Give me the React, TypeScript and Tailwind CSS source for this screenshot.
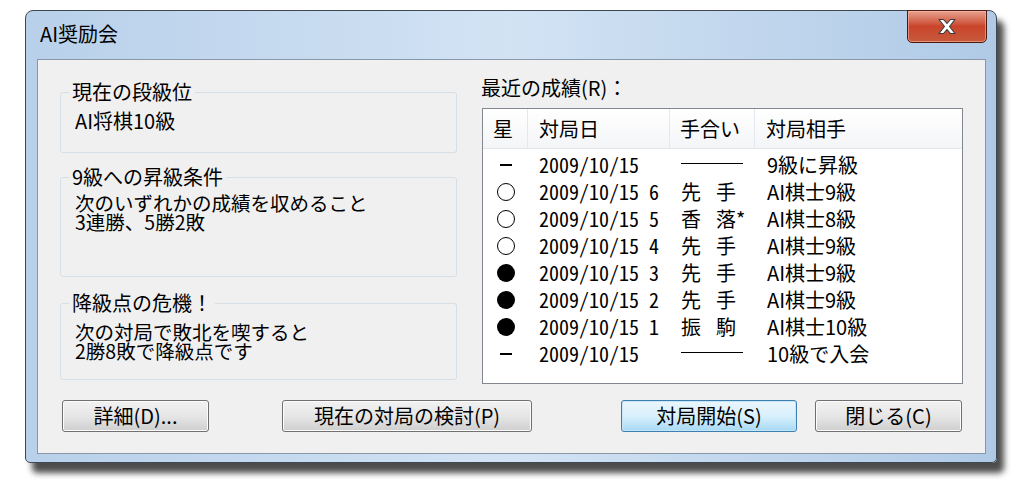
import React from 'react';

type Mark = 'dash' | 'win' | 'loss';

interface Row {
  mark: Mark;
  date: string;
  handicap: [string, string] | null;
  opponent: string;
}

const rows: Row[] = [
  { mark: 'dash', date: '2009/10/15', handicap: null, opponent: '9級に昇級' },
  { mark: 'win', date: '2009/10/15 6', handicap: ['先', '手'], opponent: 'AI棋士9級' },
  { mark: 'win', date: '2009/10/15 5', handicap: ['香', '落*'], opponent: 'AI棋士8級' },
  { mark: 'win', date: '2009/10/15 4', handicap: ['先', '手'], opponent: 'AI棋士9級' },
  { mark: 'loss', date: '2009/10/15 3', handicap: ['先', '手'], opponent: 'AI棋士9級' },
  { mark: 'loss', date: '2009/10/15 2', handicap: ['先', '手'], opponent: 'AI棋士9級' },
  { mark: 'loss', date: '2009/10/15 1', handicap: ['振', '駒'], opponent: 'AI棋士10級' },
  { mark: 'dash', date: '2009/10/15', handicap: null, opponent: '10級で入会' },
];

const GroupBox: React.FC<{ title: string; boxH: string; pad: string; children: React.ReactNode }> = ({
  title,
  boxH,
  pad,
  children,
}) => (
  <div className="relative pt-[12px]">
    <div className={`${boxH} ${pad} pl-[14px] border border-[#d5dfe5] rounded-[3px]`}>{children}</div>
    <div className="absolute top-[1px] left-[9px] px-[3px] bg-[#f0f0f0] leading-[22px]">{title}</div>
  </div>
);

const MarkCell: React.FC<{ mark: Mark }> = ({ mark }) => {
  if (mark === 'dash') return <span className="block w-[12px] h-[2px] bg-black" />;
  if (mark === 'win') return <span className="block w-[18px] h-[18px] rounded-full border-[1.5px] border-black" />;
  return <span className="block w-[18px] h-[18px] rounded-full bg-black" />;
};

const Button: React.FC<{ w: string; ml?: string; primary?: boolean; children: React.ReactNode }> = ({
  w,
  ml = '',
  primary,
  children,
}) => (
  <div
    className={`${w} ${ml} h-[32px] flex items-center justify-center rounded-[3px] border leading-none ${
      primary
        ? 'border-[#3c7fb1] bg-gradient-to-b from-[#eaf6fd] via-[#d9f0fc] to-[#a7d9f5] shadow-[inset_0_0_0_1px_#c6e6f8]'
        : 'border-[#707070] bg-gradient-to-b from-[#f2f2f2] via-[#e6e6e6] to-[#cfcfcf] shadow-[inset_0_0_0_1px_#fcfcfc]'
    }`}
  >
    {children}
  </div>
);

export default function App() {
  return (
    <div
      className="w-[1024px] h-[488px] bg-white pt-[10px] pl-[25px] text-[20px] text-black"
      style={{ fontFamily: '"Noto Sans CJK JP", "Noto Sans", sans-serif' }}
    >
      <div className="relative w-[972px] h-[453px] flex flex-col rounded-t-[8px] rounded-b-[5px] border border-[#3f4852] bg-gradient-to-r from-[#b8d0ea] via-[#d2e3f4] to-[#b0cae6] shadow-[7px_10px_6px_rgba(0,0,0,0.7)]">
        {/* title bar */}
        <div className="h-[48px] flex items-center pl-[14px] pb-[2px] shrink-0">
          <span className="leading-none">AI奨励会</span>
        </div>

        {/* close button */}
        <div className="absolute top-[-1px] right-[9px] w-[80px] h-[33px] flex items-center justify-center rounded-b-[5px] border border-[#4e1a10] bg-gradient-to-b from-[#e6a08e] via-[#c9442a] to-[#c85a3d] shadow-[inset_0_0_0_1px_rgba(255,200,180,0.5)]">
          <svg width="22" height="17" viewBox="0 0 22 17">
            <path
              d="M3 1.5h4.5l3.5 4 3.5-4H19l-5.5 7 5.5 7h-4.5l-3.5-4-3.5 4H3l5.5-7z"
              fill="#ffffff"
              stroke="#3a3a3a"
              strokeWidth="1.1"
              strokeLinejoin="round"
            />
          </svg>
        </div>

        {/* client area */}
        <div className="ml-[11px] mr-[10px] mb-[8px] flex-1 border border-[#8997a8] bg-[#f0f0f0] pt-[16px]">
          <div className="flex pl-[22px]">
            {/* left column */}
            <div className="w-[397px] mt-[4px] flex flex-col">
              <GroupBox title="現在の段級位" boxH="h-[61px]" pad="pt-[16px]">
                <div className="leading-[24px]">AI将棋10級</div>
              </GroupBox>
              <div className="mt-[12px]">
                <GroupBox title="9級への昇級条件" boxH="h-[100px]" pad="pt-[15px]">
                  <div className="text-[19.5px] leading-[19px]">次のいずれかの成績を収めること</div>
                  <div className="text-[19.5px] leading-[19px]">3連勝、5勝2敗</div>
                </GroupBox>
              </div>
              <div className="mt-[14px]">
                <GroupBox title="降級点の危機！" boxH="h-[77px]" pad="pt-[18px]">
                  <div className="text-[19.5px] leading-[19px]">次の対局で敗北を喫すると</div>
                  <div className="text-[19.5px] leading-[19px]">2勝8敗で降級点です</div>
                </GroupBox>
              </div>
            </div>

            {/* right column */}
            <div className="ml-[25px] w-[481px] flex flex-col">
              <div className="h-[24px] leading-[24px] -ml-[1px]">最近の成績(R)：</div>
              <div className="mt-[8px] h-[276px] border border-[#828790] bg-white">
                <div className="h-[40px] flex border-b border-[#e3e6ea] bg-gradient-to-b from-white to-[#f4f5f7]">
                  <div className="w-[45px] pl-[10px] flex items-center border-r border-[#e3e8ee]">星</div>
                  <div className="w-[142px] pl-[11px] flex items-center border-r border-[#e3e8ee]">対局日</div>
                  <div className="w-[85px] pl-[10px] flex items-center border-r border-[#e3e8ee]">手合い</div>
                  <div className="flex-1 pl-[11px] flex items-center">対局相手</div>
                </div>
                <div className="pt-[2px]">
                  {rows.map((r, i) => (
                    <div key={i} className="h-[27px] flex items-center">
                      <div className="w-[45px] flex justify-center">
                        <MarkCell mark={r.mark} />
                      </div>
                      <div className="w-[142px] pl-[11px] whitespace-pre leading-none [font-feature-settings:'hwid']">
                        {r.date}
                      </div>
                      <div className="w-[85px] pl-[11px] flex items-center leading-none">
                        {r.handicap ? (
                          <>
                            <span>{r.handicap[0]}</span>
                            <span className="ml-[15px]">{r.handicap[1]}</span>
                          </>
                        ) : (
                          <span className="block w-[62px] h-[1.5px] bg-black -mt-[2px]" />
                        )}
                      </div>
                      <div className="flex-1 pl-[12px] leading-none">{r.opponent}</div>
                    </div>
                  ))}
                </div>
              </div>
            </div>
          </div>

          {/* buttons */}
          <div className="flex pl-[24px] mt-[16px]">
            <Button w="w-[147px]">詳細(D)...</Button>
            <Button w="w-[250px]" ml="ml-[73px]">現在の対局の検討(P)</Button>
            <Button w="w-[176px]" ml="ml-[89px]" primary>
              対局開始(S)
            </Button>
            <Button w="w-[147px]" ml="ml-[18px]">閉じる(C)</Button>
          </div>
        </div>
      </div>
    </div>
  );
}
